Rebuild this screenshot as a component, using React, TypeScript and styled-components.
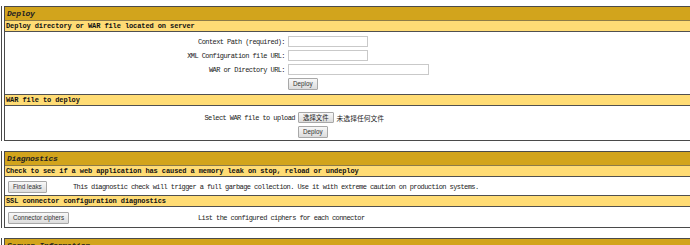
import React from "react";
import styled, { createGlobalStyle } from "styled-components";

const Global = createGlobalStyle`
  html, body { margin: 0; padding: 0; background: #fff; overflow: hidden; }
  body { width: 690px; height: 245px; }
`;

const Page = styled.div`
  display: flex;
  flex-direction: column;
  gap: 10px;
  padding-top: 6px;
  width: 690px;
  height: 245px;
  overflow: hidden;
`;

const Section = styled.section`
  display: flex;
  flex: none;
  margin-left: 1px;
  border-left: 1px solid #4a4a4a;
  padding-left: 2px;
`;

const Table = styled.div`
  display: flex;
  flex-direction: column;
  width: 900px;
  flex: none;
  border: 1px solid #4a4a4a;
  & > *:not(:last-child) {
    border-bottom: 1px solid #505050;
  }
`;

const TitleRow = styled.div`
  height: 13px;
  background: #d2a41c;
  padding-left: 2px;
  font-family: "Liberation Mono", monospace;
  font-style: italic;
  font-weight: bold;
  font-size: 8px;
  letter-spacing: -0.2px;
  line-height: 13px;
  color: #222;
  &&& { border-bottom-color: #8e7c48; }
`;

const HeaderRow = styled.div`
  height: 10px;
  background: #ffdc75;
  padding-left: 1px;
  font-family: "Liberation Mono", monospace;
  font-weight: bold;
  font-size: 7px;
  letter-spacing: -0.1px;
  line-height: 10px;
  color: #111;
  white-space: nowrap;
`;

const FormBody = styled.div<{ $pad: string; $label: number }>`
  display: grid;
  grid-template-columns: ${(p) => p.$label}px auto;
  column-gap: 3px;
  row-gap: 3px;
  justify-content: start;
  align-items: center;
  padding: ${(p) => p.$pad};
  background: #fff;
`;

const Label = styled.span`
  justify-self: end;
  font-family: "Liberation Mono", monospace;
  font-size: 7px;
  letter-spacing: -0.58px;
  color: #222;
  white-space: nowrap;
`;

const Field = styled.div`
  grid-column: 2;
  display: flex;
  align-items: center;
  gap: 3px;
`;

const Input = styled.input<{ $w: number }>`
  box-sizing: border-box;
  width: ${(p) => p.$w}px;
  height: 11px;
  margin: 0;
  padding: 0;
  border: 1px solid #c9c9c9;
  background: #fff;
  outline: none;
`;

const Button = styled.button`
  box-sizing: border-box;
  height: 12px;
  margin: 0;
  padding: 0 4px;
  border: 1px solid #a8a8a8;
  border-radius: 1px;
  background: linear-gradient(#f8f8f8, #dcdcdc);
  font-family: "Liberation Sans", "Noto Sans CJK SC", sans-serif;
  font-size: 6.3px;
  line-height: 10px;
  color: #333;
  white-space: nowrap;
  justify-self: start;
`;

const FileButton = styled(Button)`
  height: 11px;
  font-family: "Noto Sans CJK SC", sans-serif;
  font-size: 6.4px;
  line-height: 9px;
  color: #222;
`;

const NoFile = styled.span`
  font-family: "Noto Sans CJK SC", sans-serif;
  font-size: 6.8px;
  color: #222;
  white-space: nowrap;
`;

const ActionRow = styled.div<{ $col: number; $pad: string }>`
  display: grid;
  grid-template-columns: ${(p) => p.$col}px auto;
  align-items: center;
  padding: ${(p) => p.$pad};
  background: #fff;
`;

const Note = styled.span`
  font-family: "Liberation Mono", monospace;
  font-size: 7px;
  letter-spacing: -0.58px;
  color: #222;
  white-space: nowrap;
`;

export default function App() {
  return (
    <>
      <Global />
      <Page>
        <Section>
          <Table>
            <TitleRow>Deploy</TitleRow>
            <HeaderRow>Deploy directory or WAR file located on server</HeaderRow>
            <FormBody $pad="4px 0 4px 0" $label={280}>
              <Label>Context Path (required):</Label>
              <Field><Input $w={80} /></Field>
              <Label>XML Configuration file URL:</Label>
              <Field><Input $w={80} /></Field>
              <Label>WAR or Directory URL:</Label>
              <Field><Input $w={141} /></Field>
              <Field><Button>Deploy</Button></Field>
            </FormBody>
            <HeaderRow>WAR file to deploy</HeaderRow>
            <FormBody $pad="6px 0 2px 0" $label={290}>
              <Label>Select WAR file to upload</Label>
              <Field>
                <FileButton>选择文件</FileButton>
                <NoFile>未选择任何文件</NoFile>
              </Field>
              <Field><Button>Deploy</Button></Field>
            </FormBody>
          </Table>
        </Section>
        <Section>
          <Table>
            <TitleRow>Diagnostics</TitleRow>
            <HeaderRow>Check to see if a web application has caused a memory leak on stop, reload or undeploy</HeaderRow>
            <ActionRow $col={65} $pad="4px 0 2px 3px">
              <Button>Find leaks</Button>
              <Note>This diagnostic check will trigger a full garbage collection. Use it with extreme caution on production systems.</Note>
            </ActionRow>
            <HeaderRow>SSL connector configuration diagnostics</HeaderRow>
            <ActionRow $col={190} $pad="5px 0 3px 3px">
              <Button>Connector ciphers</Button>
              <Note>List the configured ciphers for each connector</Note>
            </ActionRow>
          </Table>
        </Section>
        <Section>
          <Table>
            <TitleRow>Server Information</TitleRow>
          </Table>
        </Section>
      </Page>
    </>
  );
}
